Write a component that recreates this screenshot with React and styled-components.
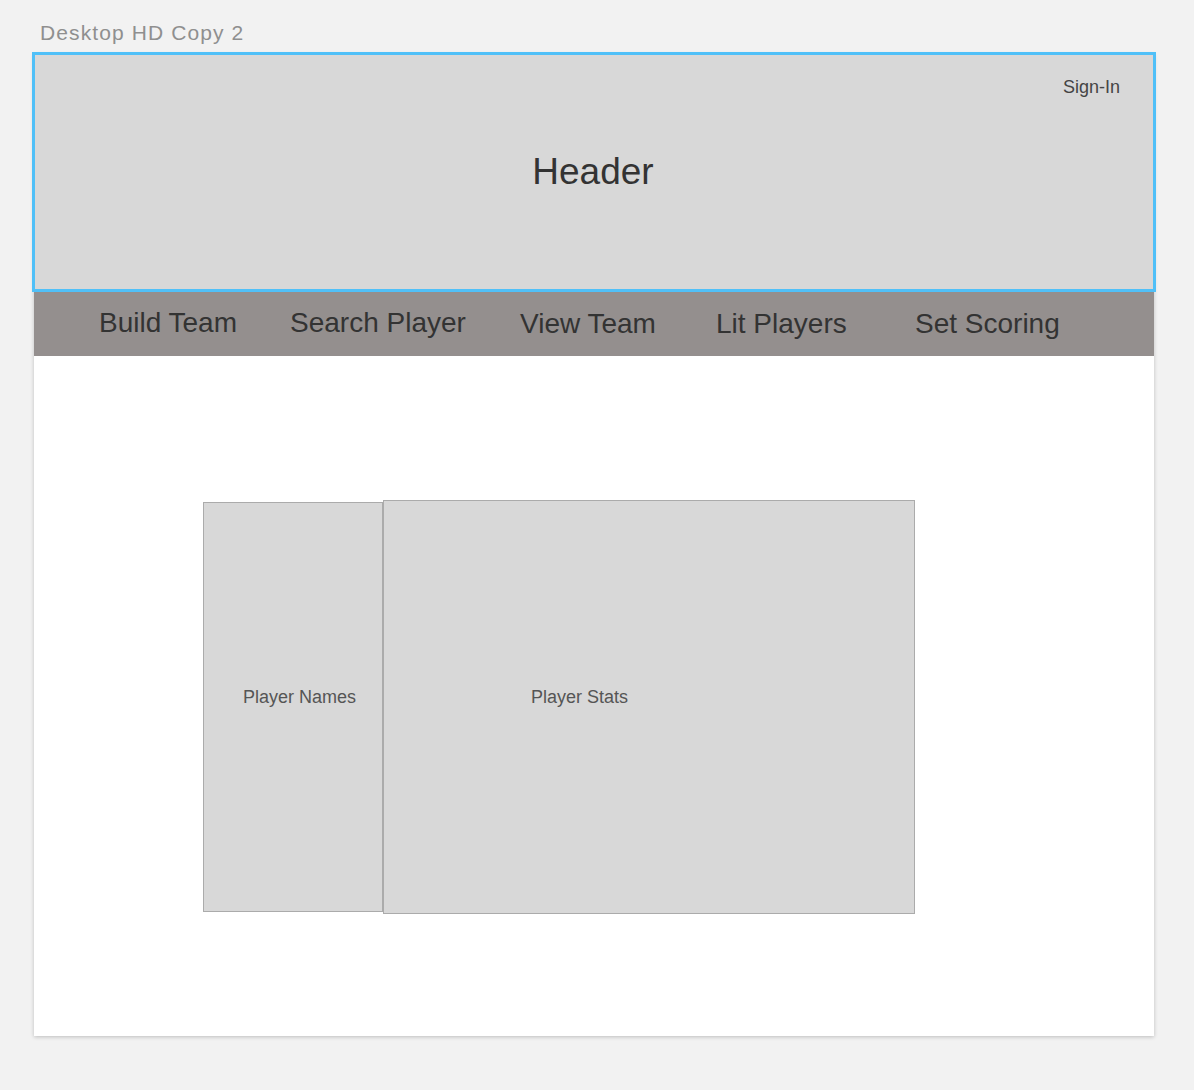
import React from 'react'
import styled, { createGlobalStyle } from 'styled-components'

const GlobalStyle = createGlobalStyle`
  html, body {
    margin: 0;
    padding: 0;
    background: #f2f2f2;
    font-family: "Liberation Sans", Arial, sans-serif;
  }
`

const Canvas = styled.div`
  padding: 20px 0 54px 34px;
`

const BoardLabel = styled.div`
  margin-left: 6px;
  height: 34px;
  font-size: 21px;
  line-height: 25px;
  letter-spacing: 1.1px;
  color: #8f8f8f;
`

const Artboard = styled.div`
  width: 1120px;
  background: #ffffff;
  box-shadow: 0 1px 4px rgba(0, 0, 0, 0.22);
`

const Header = styled.header`
  position: relative;
  z-index: 1;
  height: 236px;
  background: #d8d8d8;
  outline: 3px solid #50c0f8;
  outline-offset: -1px;
  display: flex;
  align-items: center;
  justify-content: center;
`

const HeaderTitle = styled.h1`
  margin: 0;
  font-size: 37px;
  font-weight: 400;
  color: #333333;
  padding-right: 2px;
`

const SignIn = styled.a`
  position: absolute;
  top: 23px;
  right: 34px;
  font-size: 18px;
  color: #444444;
  text-decoration: none;
`

const Nav = styled.nav`
  height: 66px;
  background: #948f8e;
  display: flex;
  align-items: center;
  padding-left: 65px;
`

const NavItem = styled.a`
  flex: 0 0 ${p => p.$w}px;
  margin-top: ${p => p.$drop}px;
  font-size: 28px;
  color: #333333;
  text-decoration: none;
  white-space: nowrap;
`

const Content = styled.main`
  height: 680px;
  display: flex;
  align-items: flex-start;
  padding: 144px 0 0 169px;
  box-sizing: border-box;
`

const Panel = styled.section`
  box-sizing: border-box;
  width: ${p => p.$w}px;
  height: ${p => p.$h}px;
  margin-top: ${p => p.$offset || 0}px;
  background: #d8d8d8;
  border: 1px solid #ababab;
  padding: ${p => p.$top}px 0 0 ${p => p.$left}px;
  font-size: 18px;
  line-height: 22px;
  color: #555555;
`

const navItems = [
  { label: 'Build Team', w: 191, drop: 0 },
  { label: 'Search Player', w: 230, drop: 0 },
  { label: 'View Team', w: 196, drop: 1 },
  { label: 'Lit Players', w: 199, drop: 1 },
  { label: 'Set Scoring', w: 160, drop: 2 },
]

export default function App() {
  return (
    <>
      <GlobalStyle />
      <Canvas>
        <BoardLabel>Desktop HD Copy 2</BoardLabel>
        <Artboard>
          <Header>
            <HeaderTitle>Header</HeaderTitle>
            <SignIn href="#">Sign-In</SignIn>
          </Header>
          <Nav>
            {navItems.map(item => (
              <NavItem key={item.label} href="#" $w={item.w} $drop={item.drop}>
                {item.label}
              </NavItem>
            ))}
          </Nav>
          <Content>
            <Panel $w={180} $h={410} $offset={2} $top={183} $left={39}>Player Names</Panel>
            <Panel $w={532} $h={414} $top={185} $left={147}>Player Stats</Panel>
          </Content>
        </Artboard>
      </Canvas>
    </>
  )
}
